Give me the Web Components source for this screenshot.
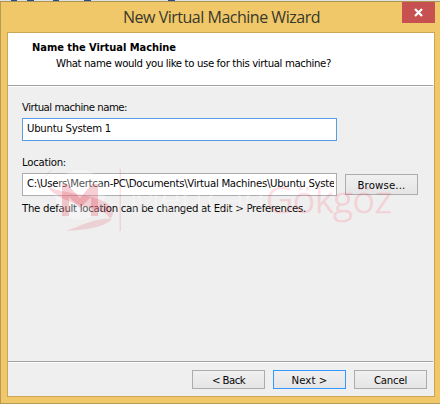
<!DOCTYPE html>
<html lang="en"><head><meta charset="utf-8"><title>New Virtual Machine Wizard</title>
<style>html,body{margin:0;width:440px;height:404px;overflow:hidden}body{font:11.3px/14px "DejaVu Sans Condensed","DejaVu Sans",sans-serif;font-stretch:condensed;color:#080808}</style></head><body>
<vm-window></vm-window>
<script>
// Text run whose tracking is adjusted to a given advance width.
class FitText extends HTMLElement{
  constructor(){super();this.attachShadow({mode:'open'}).innerHTML='<style>:host{display:inline-block;white-space:nowrap;vertical-align:top}span{display:inline-block}</style><span><slot></slot></span>'}
  connectedCallback(){
    const s=this.shadowRoot.querySelector('span'),target=+this.getAttribute('width');
    this.style.width=target+'px';
    const n=this.textContent.length;
    s.style.letterSpacing=((target-s.getBoundingClientRect().width)/n)+'px';
  }
}
class VmButton extends HTMLElement{
  constructor(){super();this.attachShadow({mode:'open'}).innerHTML=`<style>
  :host{box-sizing:border-box;display:flex;justify-content:center;width:73px;height:var(--h,19px);border:1px solid #acacac;background:linear-gradient(#f0f0f0,#e5e5e5);padding-top:var(--pt,3px)}
  :host([primary]){border-color:#3399ff}</style><slot></slot>`}
}
class VmField extends HTMLElement{
  constructor(){super();this.attachShadow({mode:'open'}).innerHTML=`<style>
  :host{box-sizing:border-box;display:block;width:315px;height:23px;border:1px solid #abadb3;background:#fff;padding:3px 2px 0 4px}
  :host([active]){border-color:#569de5}div{overflow:hidden;height:16px}</style><div><slot></slot></div>`}
}
class VmWatermark extends HTMLElement{
  constructor(){super();this.attachShadow({mode:'open'}).innerHTML=`<style>
  :host{position:absolute;left:-1px;top:0;pointer-events:none}svg{display:block}text{font:300 36px "Open Sans","Noto Sans",sans-serif}</style>
  <svg width="440" height="404">
  <circle cx="80" cy="195" r="25" fill="#fff" opacity=".3"/>
  <g fill="#d91f35">
  <path opacity=".22" d="M62 216V184H67L80 198L92 184H98V216H91V197L80 208L69 197V216Z"/>
  <path opacity=".17" d="M54 169C45 174 42 181 48 186C55 192 82 193 98 199C112 204 117 212 110 219C108 213 101 211 88 207C70 203 51 195 46 184C43 178 46 172 54 169Z"/>
  <path opacity=".14" d="M112 219C98 217 82 225 66 231C84 230 104 228 112 219Z"/>
  <rect x="119.500" y="169" width="1.500" height="62" opacity=".13"/></g>
  <text x="129" y="211" textLength="136" lengthAdjust="spacingAndGlyphs" fill="#fff" opacity=".32">Mertcan</text>
  <text x="266" y="213" textLength="126" lengthAdjust="spacingAndGlyphs" fill="#ff304b" stroke="#ff304b" stroke-width=".7" opacity=".15">Gökgöz</text>
  </svg>`}
}
class VmWindow extends HTMLElement{
  constructor(){super();this.attachShadow({mode:'open'}).innerHTML=`<style>
  :host{display:block;position:relative;box-sizing:border-box;width:440px;height:404px;background:#f0c869;border-left:1px solid #b79a55;border-bottom:1px solid #b79a55}
  .behind{height:1px;background:#dfe1e4;margin-left:-1px}
  .behind svg{display:block}
  header{box-sizing:border-box;height:31px;border-top:1px solid #ad9550;display:grid;grid-template-columns:122px 1fr 33px 5px}
  .title{font:16px/24px "Open Sans","Noto Sans",sans-serif;color:#39382c;padding-top:3px}
  .close{height:21px;background:#c75050;display:flex}
  .body{box-sizing:border-box;margin-left:6px;width:428px;height:365px;border:1px solid #cba556;background:#efefef;display:flex;flex-direction:column}
  .head{height:52px;background:#fff;padding:8px 0 0 24px;box-sizing:border-box;color:#000}
  .head b{display:block;height:16px;font-size:11px}
  .sub{padding-left:24px}
  .line{height:1px;background:#9fa3a0;border-bottom:1px solid #fff;margin-right:1px;flex:none}
  main{flex:1;padding:14px 0 0 14px}
  .label{height:17px}.label.loc{margin-top:15px}
  .row{display:flex;gap:8px}.row vm-button{margin-top:1px;--h:21px;--pt:4px}
  .note{margin-top:6px}
  footer{height:33px;box-sizing:border-box;padding:7px 7px 0 0;display:flex;justify-content:flex-end;gap:8px}
  </style>
  <div class="behind"><svg width="440" height="1"><path d="M11 .5h6M27 .5h7M53 .5h6M84 .5h7M168 .5h7" stroke="#234b8c"/></svg></div>
  <header><i></i><div class="title"><fit-text width="197">New Virtual Machine Wizard</fit-text></div>
  <div class="close"><svg width="33" height="21"><path d="M13 7L20 14M20 7L13 14" stroke="#fff" stroke-width="2.200"/></svg></div></header>
  <div class="body"><div class="head"><b><fit-text width="144">Name the Virtual Machine</fit-text></b><div class="sub"><fit-text width="275">What name would you like to use for this virtual machine?</fit-text></div></div>
  <div class="line"></div>
  <main><div class="label"><fit-text width="105">Virtual machine name:</fit-text></div>
  <vm-field active><fit-text width="84">Ubuntu System 1</fit-text></vm-field>
  <div class="label loc"><fit-text width="44">Location:</fit-text></div>
  <div class="row"><vm-field><fit-text width="308">C:\\Users\\Mertcan-PC\\Documents\\Virtual Machines\\Ubuntu Syste</fit-text></vm-field><vm-button><fit-text width="48">Browse...</fit-text></vm-button></div>
  <div class="note"><fit-text width="284">The default location can be changed at Edit &gt; Preferences.</fit-text></div></main>
  <div class="line"></div>
  <footer><vm-button><fit-text width="33">&lt; Back</fit-text></vm-button><vm-button primary><fit-text width="36">Next &gt;</fit-text></vm-button><vm-button><fit-text width="33">Cancel</fit-text></vm-button></footer></div>
  <vm-watermark></vm-watermark>`}
}
customElements.define('vm-button',VmButton);
customElements.define('vm-field',VmField);
customElements.define('vm-watermark',VmWatermark);
customElements.define('vm-window',VmWindow);
customElements.define('fit-text',FitText);
</script></body></html>
